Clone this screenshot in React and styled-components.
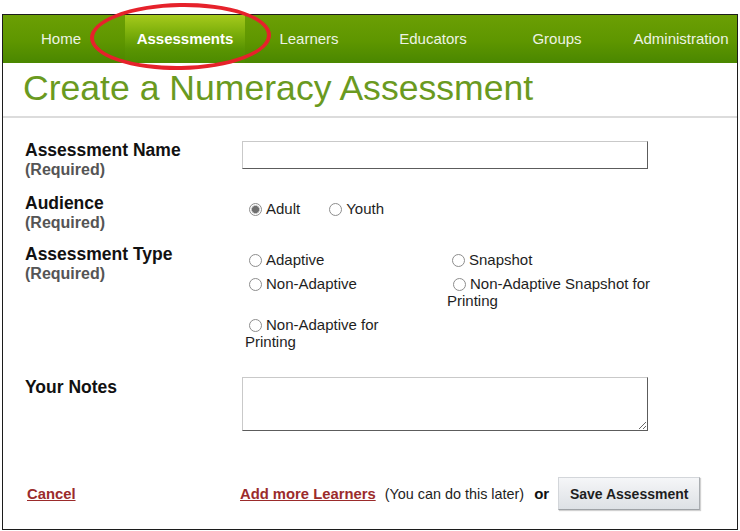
import * as React from "react"
import styled, { createGlobalStyle } from "styled-components"

// Global styles
const GlobalStyle = createGlobalStyle`
  html, body {
    margin: 0;
    padding: 0;
    background: #ffffff;
    font-family: "Liberation Sans", Arial, sans-serif;
  }
`

// Page + frame
const Page = styled.div`
  position: relative;
  padding: 14px 0 0 2px;
  width: 740px;
  height: 531px;
  box-sizing: border-box;
  overflow: hidden;
`

const Frame = styled.div`
  width: 736px;
  height: 516px;
  box-sizing: border-box;
  border: 1px solid #1c1c1c;
  background: #ffffff;
  overflow: hidden;
`

// Top navigation
const Nav = styled.nav`
  height: 48px;
  background: linear-gradient(to bottom, #6b9f04 0%, #5e9600 55%, #4a8700 100%);
  overflow: hidden;
`

const TabList = styled.div`
  display: flex;
  gap: 4px;
  margin-left: -2px;
`

const Tab = styled.a`
  flex: 0 0 120px;
  height: 48px;
  line-height: 48px;
  text-align: center;
  font-size: 15px;
  font-weight: ${p => (p.$active ? "bold" : "normal")};
  color: ${p => (p.$active ? "#ffffff" : "#edf3e4")};
  text-decoration: none;
  white-space: nowrap;
  background: ${p =>
    p.$active
      ? "linear-gradient(to bottom, #a6ca1c 0%, #7fb10c 35%, #5a9502 70%, #4c8a00 100%)"
      : "transparent"};
`

// Hand drawn annotation over the active tab
const Highlight = styled.div`
  position: absolute;
  left: 90px;
  top: 3px;
  width: 181px;
  height: 67px;
  box-sizing: border-box;
  border: 4px solid #e6222b;
  border-radius: 50%;
  transform: rotate(-1deg);
  pointer-events: none;
`

// Title
const TitleBar = styled.div`
  padding: 5px 0 8px 20px;
  border-bottom: 2px solid #dcdcdc;
`

const Title = styled.h1`
  margin: 0;
  font-size: 35.6px;
  line-height: 40px;
  font-weight: normal;
  color: #6a9a1f;
`

// Form
const Form = styled.form`
  padding: 22.5px 0 0 22px;
`

const Row = styled.div`
  display: grid;
  grid-template-columns: 217px 1fr;
  margin-top: ${p => p.$top || 0}px;
`

const LabelBlock = styled.div`
  display: flex;
  flex-direction: column;
  padding-top: ${p => p.$shift || 0}px;
`

const Label = styled.label`
  font-size: 17.5px;
  line-height: 19px;
  font-weight: bold;
  color: #111111;
`

const Required = styled.span`
  font-size: 16px;
  line-height: 19px;
  font-weight: bold;
  color: #555555;
`

const TextInput = styled.input`
  display: block;
  width: 406px;
  height: 28px;
  margin-top: 0.5px;
  box-sizing: border-box;
  border: 1px solid;
  border-color: #c9c9c9 #5c5c5c #5c5c5c #c9c9c9;
  outline: none;
  font-family: inherit;
  font-size: 15px;
`

const NotesArea = styled.textarea`
  display: block;
  width: 406px;
  height: 54px;
  box-sizing: border-box;
  border: 1px solid;
  border-color: #c9c9c9 #5c5c5c #5c5c5c #c9c9c9;
  outline: none;
  font-family: inherit;
  font-size: 15px;
`

const InlineOptions = styled.div`
  display: flex;
  gap: 25px;
  padding: 7.25px 0 0 3px;
`

const OptionGrid = styled.div`
  display: grid;
  grid-template-columns: 202px 204px;
  row-gap: 8px;
  padding: 7.25px 0 0 3px;
  align-items: start;
`

const Option = styled.label`
  display: block;
  max-width: ${p => (p.$narrow ? "180px" : "none")};
  font-size: 15px;
  line-height: 16.5px;
  color: #1e1e1e;
`

const Radio = styled.span`
  display: inline-block;
  width: 13px;
  height: 13px;
  box-sizing: border-box;
  margin: 0 4px 0 ${p => p.$inset || 4}px;
  vertical-align: -2px;
  border-radius: 50%;
  border: 1px solid #8d8d8d;
  background: ${p =>
    p.$checked
      ? "radial-gradient(circle, #6f6f6f 0 3.3px, #c9c9c9 3.8px 4.2px, #ffffff 4.6px)"
      : "#ffffff"};
`

// Footer
const Footer = styled.div`
  display: grid;
  grid-template-columns: 213px 1fr;
  align-items: center;
  margin-top: 46px;
  padding-left: 2px;
`

const LinkText = styled.a`
  font-size: 14.8px;
  font-weight: bold;
  color: #9b2b2b;
  text-decoration: underline;
`

const Actions = styled.div`
  display: flex;
  align-items: center;
  gap: 9px;
`

const Hint = styled.span`
  font-size: 14.4px;
  color: #1e1e1e;
`

const Or = styled.span`
  font-size: 15px;
  font-weight: bold;
  color: #111111;
  margin-left: 1px;
`

const SaveButton = styled.button`
  width: 142px;
  height: 33px;
  padding: 0;
  font-family: inherit;
  font-size: 14px;
  font-weight: bold;
  color: #1e1e1e;
  border: 1px solid;
  border-color: #d3d6da #a9adb1 #9ea2a6 #d3d6da;
  background: linear-gradient(to bottom, #f5f6f8 0%, #e9ebee 50%, #dde1e5 100%);
  box-shadow: 1px 1px 1px rgba(0, 0, 0, 0.18);
`

const tabs = ["Home", "Assessments", "Learners", "Educators", "Groups", "Administration"]

export default function App() {
  return (
    <>
      <GlobalStyle />
      <Page>
        <Frame>
          <Nav>
            <TabList>
              {tabs.map(t => (
                <Tab key={t} $active={t === "Assessments"}>{t}</Tab>
              ))}
            </TabList>
          </Nav>
          <TitleBar>
            <Title>Create a Numeracy Assessment</Title>
          </TitleBar>

          <Form onSubmit={e => e.preventDefault()}>
            <Row>
              <LabelBlock>
                <Label>Assessment Name</Label>
                <Required>(Required)</Required>
              </LabelBlock>
              <TextInput type="text" />
            </Row>

            <Row $top={15}>
              <LabelBlock>
                <Label>Audience</Label>
                <Required>(Required)</Required>
              </LabelBlock>
              <InlineOptions>
                <Option><Radio $checked />Adult</Option>
                <Option><Radio />Youth</Option>
              </InlineOptions>
            </Row>

            <Row $top={13}>
              <LabelBlock>
                <Label>Assessment Type</Label>
                <Required>(Required)</Required>
              </LabelBlock>
              <OptionGrid>
                <Option><Radio />Adaptive</Option>
                <Option><Radio $inset={5} />Snapshot</Option>
                <Option><Radio />Non-Adaptive</Option>
                <Option><Radio $inset={6} />Non-Adaptive Snapshot for Printing</Option>
                <Option $narrow><Radio />Non-Adaptive for Printing</Option>
              </OptionGrid>
            </Row>

            <Row $top={27}>
              <LabelBlock $shift={0.5}>
                <Label>Your Notes</Label>
              </LabelBlock>
              <NotesArea />
            </Row>

            <Footer>
              <div>
                <LinkText href="#">Cancel</LinkText>
              </div>
              <Actions>
                <LinkText href="#">Add more Learners</LinkText>
                <Hint>(You can do this later)</Hint>
                <Or>or</Or>
                <SaveButton type="button">Save Assessment</SaveButton>
              </Actions>
            </Footer>
          </Form>
        </Frame>
        <Highlight />
      </Page>
    </>
  )
}
